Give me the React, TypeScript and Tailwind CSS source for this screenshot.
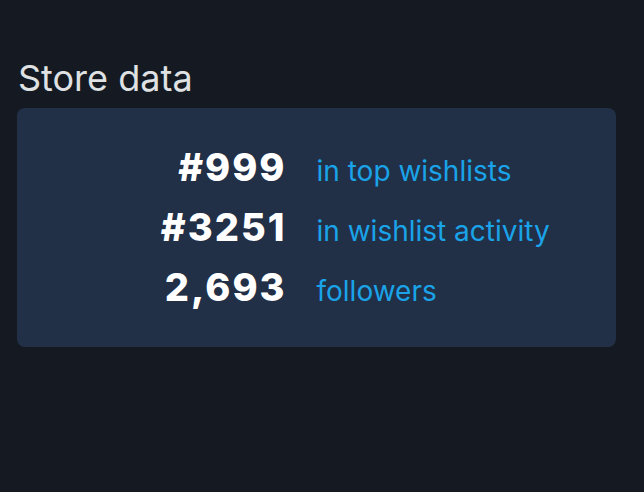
export default function App() {
  const rows = [
    ["#999", "in top wishlists"],
    ["#3251", "in wishlist activity"],
    ["2,693", "followers"],
  ];
  return (
    <div className="w-[644px] h-[492px] bg-[#151a22] pl-[17px] pt-[56px]" style={{ fontFamily: "Inter, 'Noto Sans', sans-serif" }}>
      <h2 className="text-[36px] leading-[44px] text-[#dfe1e3] pl-px mb-[8px]">Store data</h2>
      <div className="w-[599px] h-[239px] rounded-[8px] bg-[#213047] pt-[29px]">
        <div className="grid grid-cols-2 items-baseline">
          {rows.map(([n, l]) => (
            <div key={n} className="contents">
              <div className="text-right pr-[30px] text-[38px] leading-[60px] font-extrabold tracking-[2px] text-white">{n}</div>
              <div className="text-[28px] leading-[40px] text-[#1aa3e8]">{l}</div>
            </div>
          ))}
        </div>
      </div>
    </div>
  );
}
